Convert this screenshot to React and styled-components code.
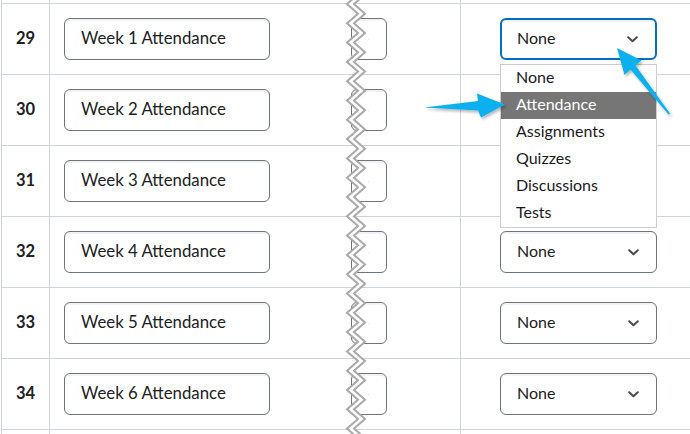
import styled, { createGlobalStyle } from 'styled-components';

const GlobalStyle = createGlobalStyle`
  html, body {
    margin: 0;
    background: #ffffff;
    font-family: Lato, "Open Sans", sans-serif;
    color: #202122;
    overflow: hidden;
  }
`;

// 28 and 35 are the rows cut off at the top / bottom edge
const rows = [28, 29, 30, 31, 32, 33, 34, 35];
const options = ['None', 'Attendance', 'Assignments', 'Quizzes', 'Discussions', 'Tests'];
// rows whose select sits under the open list
const covered = [30, 31];

// zigzag "cut" through the middle of the table
const zig = (x0, x1) => {
  const pts = [];
  for (let i = 0; i < 50; i++) {
    pts.push([i % 2 ? x1 : x0, 4 - 19.3 + i * 9.65]);
  }
  return pts;
};
const leftLine = zig(7, 18);
const rightLine = zig(14, 25);
const toStr = (p) => p.map(([x, y]) => `${x},${y.toFixed(2)}`).join(' ');

const Chevron = () => (
  <svg width='11' height='7' viewBox='0 0 11 7'>
    <path d='M1.2 1.2 L5.5 5.3 L9.8 1.2' fill='none' stroke='#494c4e' strokeWidth='2' strokeLinecap='round' strokeLinejoin='round' />
  </svg>
);

export default function App() {
  return (
    <>
      <GlobalStyle />
      <Page>
        <Table>
          {rows.map((n) => {
            const visible = n > 28 && n < 35;
            return (
              <Row key={n}>
                <NumCell>{visible && n}</NumCell>
                <MidCell>
                  {visible && (
                    <>
                      <TextBox>Week {n - 28} Attendance</TextBox>
                      <Select $width={36}>
                        <span />
                        <Chevron />
                      </Select>
                    </>
                  )}
                </MidCell>
                <TypeCell>
                  {n === 29 ? (
                    <Open>
                      <Select $width={157} $focused>
                        <span>None</span>
                        <Chevron />
                      </Select>
                      <List>
                        {options.map((o) => (
                          <Option key={o} $active={o === 'Attendance'}>
                            {o}
                          </Option>
                        ))}
                      </List>
                    </Open>
                  ) : (
                    visible &&
                    !covered.includes(n) && (
                      <Select $width={157}>
                        <span>None</span>
                        <Chevron />
                      </Select>
                    )
                  )}
                </TypeCell>
              </Row>
            );
          })}
        </Table>

        <Cut width='35' height='434' viewBox='0 0 35 434'>
          <polygon points={toStr([...leftLine, ...rightLine.slice().reverse()])} fill='#ffffff' />
          <polyline points={toStr(leftLine)} fill='none' stroke='#a9a9a9' strokeWidth='2' />
          <polyline points={toStr(rightLine)} fill='none' stroke='#a9a9a9' strokeWidth='2' />
        </Cut>

        <Arrows width='690' height='434' viewBox='0 0 690 434'>
          <defs>
            <filter id='shadow' x='-20%' y='-20%' width='140%' height='140%'>
              <feDropShadow dx='1.5' dy='2' stdDeviation='1.5' floodColor='#000' floodOpacity='0.3' />
            </filter>
          </defs>
          <g fill='#0fb0ee' filter='url(#shadow)'>
            <polygon points='424,107.5 478,101 477,93.5 505,104.5 481,117.5 478,110.5' />
            <polygon points='617,48 641.5,60.5 635.5,65.5 670,113.5 668.5,114.5 630.5,69.5 624.5,75' />
          </g>
        </Arrows>
      </Page>
    </>
  );
}

const Page = styled.div`
  position: relative;
  width: 690px;
  height: 434px;
  overflow: hidden;
`;

const Table = styled.div`
  margin-top: -67px;
  margin-left: 1px;
  border-left: 1px solid #cdd5dc;
`;

const Row = styled.div`
  display: grid;
  grid-template-columns: 48px 411px 1fr;
  height: 71px;
  box-sizing: border-box;
  border-bottom: 1px solid #cdd5dc;
`;

const NumCell = styled.div`
  display: flex;
  align-items: center;
  justify-content: center;
  padding-bottom: 3px;
  border-right: 1px solid #cdd5dc;
  font-size: 16.5px;
  font-weight: 700;
`;

const MidCell = styled.div`
  display: flex;
  align-items: center;
  justify-content: space-between;
  padding: 0 73px 0 14px;
  border-right: 1px solid #cdd5dc;
`;

const TextBox = styled.div`
  box-sizing: border-box;
  width: 206px;
  height: 42px;
  display: flex;
  align-items: center;
  padding: 0 0 3px 16px;
  border: 1px solid #6e7477;
  border-radius: 6px;
  font-size: 16.8px;
  box-shadow: inset 0 2px 0 0 rgba(185, 194, 208, 0.2);
`;

const TypeCell = styled.div`
  display: flex;
  align-items: center;
  padding-left: 39px;
`;

const Open = styled.div`
  position: relative;
  z-index: 5;
`;

const Select = styled.div`
  box-sizing: border-box;
  width: ${(p) => p.$width}px;
  height: 42px;
  display: flex;
  align-items: center;
  justify-content: space-between;
  padding: 0 17px 3px ${(p) => (p.$focused ? 15 : 16)}px;
  border: ${(p) => (p.$focused ? '2px solid #006fbf' : '1px solid #6e7477')};
  border-radius: 6px;
  background: #ffffff;
  font-size: 16px;
  box-shadow: inset 0 2px 0 0 rgba(185, 194, 208, 0.2);
  svg {
    display: block;
    margin-top: 3px;
  }
`;

const List = styled.div`
  position: absolute;
  top: calc(100% + 4px);
  left: 0;
  width: 157px;
  box-sizing: border-box;
  border: 1px solid #cdcdcd;
  background: #ffffff;
`;

const Option = styled.div`
  height: 27px;
  box-sizing: border-box;
  line-height: 23px;
  padding-left: 15px;
  font-size: 16px;
  color: ${(p) => (p.$active ? '#ffffff' : '#1b1b1b')};
  background: ${(p) => (p.$active ? '#767676' : 'transparent')};
`;

const Cut = styled.svg`
  position: absolute;
  left: 340px;
  top: 0;
  z-index: 8;
`;

const Arrows = styled.svg`
  position: absolute;
  left: 0;
  top: 0;
  z-index: 10;
  pointer-events: none;
`;
